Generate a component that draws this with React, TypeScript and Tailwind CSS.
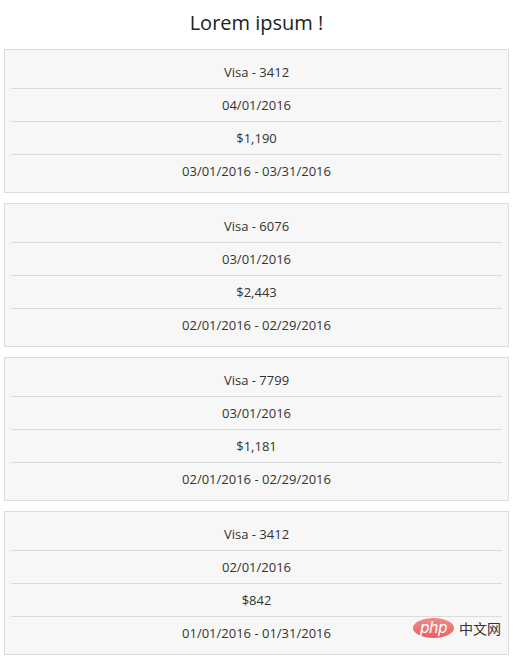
const statements = [
  { card: 'Visa - 3412', date: '04/01/2016', amount: '$1,190', period: '03/01/2016 - 03/31/2016' },
  { card: 'Visa - 6076', date: '03/01/2016', amount: '$2,443', period: '02/01/2016 - 02/29/2016' },
  { card: 'Visa - 7799', date: '03/01/2016', amount: '$1,181', period: '02/01/2016 - 02/29/2016' },
  { card: 'Visa - 3412', date: '02/01/2016', amount: '$842', period: '01/01/2016 - 01/31/2016' },
];

const StatementCard = ({ card, date, amount, period }: (typeof statements)[number]) => {
  const rows = [card, date, amount, period];
  return (
    <div className="border border-[#dcdcdc] bg-[#f7f7f7] px-[6px] pt-[6px] pb-[5px]">
      {rows.map((row, i) => (
        <div
          key={i}
          className={`flex h-[32px] items-center justify-center pt-[2px] text-[13px] text-[#333] ${
            i > 0 ? 'border-t border-[#dcdcdc] h-[33px]' : ''
          }`}
        >
          {row}
        </div>
      ))}
    </div>
  );
};

export default function App() {
  return (
    <div className="relative min-h-[661px] bg-white px-[4px] font-['Open_Sans',sans-serif]">
      <h1 className="flex h-[44px] items-center justify-center pt-[1px] text-[20px] font-normal text-[#222]">
        Lorem ipsum !
      </h1>
      <div className="mt-[5px] flex w-[505px] flex-col gap-[10px]">
        {statements.map((s, i) => (
          <StatementCard key={i} {...s} />
        ))}
      </div>

      <div className="absolute left-[413px] top-[618px] flex items-center gap-[5px]">
        <div className="flex h-[20px] w-[41px] items-center justify-center rounded-[50%] bg-gradient-to-b from-[#f08a8a] to-[#e86060]">
          <span className="text-[15px] italic leading-none text-white font-['DejaVu_Sans',sans-serif] tracking-[-0.5px]">
            php
          </span>
        </div>
        <span className="text-[14px] leading-none text-[#333] font-['Noto_Sans_CJK_SC',sans-serif]">中文网</span>
      </div>
    </div>
  );
}
